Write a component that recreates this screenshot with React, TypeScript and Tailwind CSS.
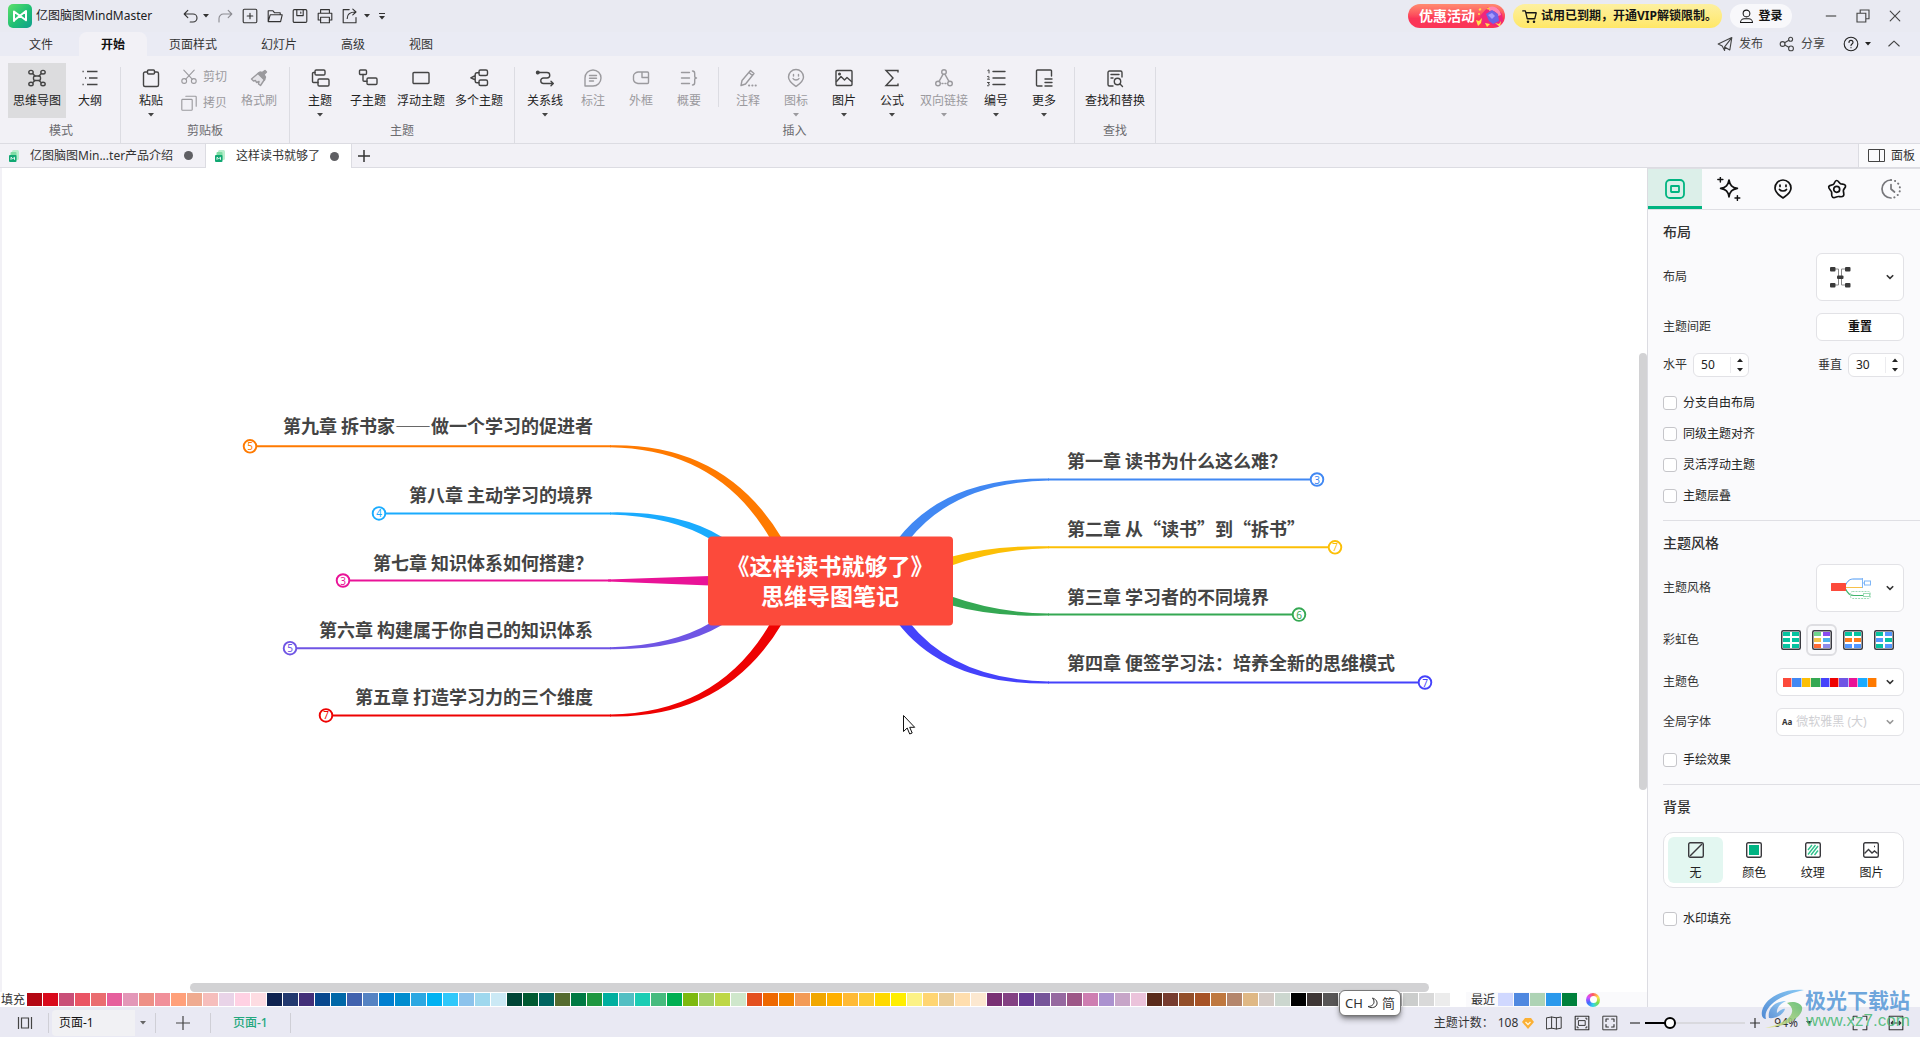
import React from 'react';

const FILL_COLORS = [
  '#b30713', '#d9091c', '#c94f78', '#ea5465', '#ea6c70', '#e65f9d', '#e397b8', '#ee9086', '#f1909a', '#ffa07a',
  '#efab90', '#f6bebc', '#e9d4e8', '#ffd1e3', '#fddce2', '#0f2350', '#22396f', '#432f78', '#08488e', '#0068a8',
  '#4162ae', '#5583c3', '#007fd0', '#008dcf', '#2ca8e2', '#00b2f2', '#2fc8fa', '#8cc3ec', '#9fd8ee', '#cbe9f5',
  '#004536', '#005a31', '#006460', '#556b2f', '#007a43', '#1f9740', '#00af9f', '#53bfc3', '#1bcdb4', '#47bb7e',
  '#00af52', '#7db90f', '#a6d064', '#bed745', '#cfe7cb', '#e4501f', '#ee6800', '#f38500', '#f39b56', '#f1a700',
  '#ffb000', '#ffba35', '#fdcb35', '#ffd900', '#ffee00', '#fcf286', '#ffd572', '#ebcd97', '#ffdeae', '#fce8d0',
  '#793174', '#844183', '#673c93', '#765599', '#9669a0', '#9d5787', '#ce7eb1', '#ab92cf', '#c7a5c8', '#ebc3db',
  '#5a2b1b', '#773c2f', '#934f2a', '#a75326', '#bf783f', '#b4866c', '#dfb885', '#d4cbc6', '#ccd7cf', '#000000',
  '#3e3635', '#585656', '#727171', '#898989', '#a0a0a0', '#b5b5b6', '#cbcdcc', '#d9d9d9', '#ececec',
];

const RECENT_COLORS = ['#d0d8ff', '#4f88e0', '#aed3b5', '#2b99ec', '#00813c'];

const THEME_COLORS = ['#fc4a3b', '#4188f3', '#fcbf06', '#35a853', '#4542fb', '#ee0202', '#6f55e4', '#e91397', '#1aabfe', '#ff7a00'];

interface Branch {
  label: string;
  color: string;
  count: number;
  side: 'left' | 'right';
  y: number;
  baseline: number;
  dot: number;
  shape: string;
}

const BRANCHES: Branch[] = [
  { label: '第九章 拆书家——做一个学习的促进者', color: '#ff7a00', count: 5, side: 'left', y: 446.3, baseline: 433, dot: 250, shape: 'M610 445.3Q726 443 783 540L771 540Q719 449 610 447.3Z' },
  { label: '第八章 主动学习的境界', color: '#1aabfe', count: 4, side: 'left', y: 513.4, baseline: 502, dot: 379, shape: 'M610 512.4Q680 511 722 537L722 542L712 540Q672 516 610 514.4Z' },
  { label: '第七章 知识体系如何搭建？', color: '#e91397', count: 3, side: 'left', y: 580.5, baseline: 570, dot: 343, shape: 'M608 579.5L710 576L710 585.4L608 581.5Z' },
  { label: '第六章 构建属于你自己的知识体系', color: '#6f55e4', count: 5, side: 'left', y: 648.2, baseline: 637, dot: 290, shape: 'M610 649.2Q680 650 722 625L722 620L712 622Q672 646 610 647.2Z' },
  { label: '第五章 打造学习力的三个维度', color: '#ee0202', count: 7, side: 'left', y: 715.4, baseline: 704, dot: 326, shape: 'M610 716.4Q726 719 783 622L771 622Q719 713 610 714.4Z' },
  { label: '第一章 读书为什么这么难？', color: '#4188f3', count: 3, side: 'right', y: 479.5, baseline: 468, dot: 1317, shape: 'M1049 478.5Q945 477 897 540L909 540Q955 482 1049 480.5Z' },
  { label: '第二章 从“读书”到“拆书”', color: '#fcbf06', count: 7, side: 'right', y: 547.3, baseline: 536, dot: 1335, shape: 'M1049 546.3Q993 545 950 557L950 566Q998 549 1049 548.3Z' },
  { label: '第三章 学习者的不同境界', color: '#35a853', count: 6, side: 'right', y: 614.6, baseline: 604, dot: 1299, shape: 'M1049 615.6Q993 617 950 605L950 596Q998 613 1049 613.6Z' },
  { label: '第四章 便签学习法：培养全新的思维模式', color: '#4542fb', count: 7, side: 'right', y: 682.5, baseline: 670, dot: 1425, shape: 'M1049 683.5Q945 685 897 622L909 622Q955 680 1049 681.5Z' },
];

interface IconProps {
  children: React.ReactNode;
  className?: string;
}

// 20px outline icon used in the ribbon, the title bar and the side panel
const Icon: React.FC<IconProps> = ({ children, className = 'size-5' }) => (
  <svg
    viewBox="0 0 20 20"
    fill="none"
    stroke="currentColor"
    strokeWidth="1.4"
    strokeLinecap="round"
    strokeLinejoin="round"
    className={`shrink-0 ${className}`}
    aria-hidden="true"
  >
    {children}
  </svg>
);

const Caret: React.FC<{ className?: string }> = ({ className = '' }) => (
  <svg viewBox="0 0 6 4" fill="currentColor" className={`h-1 w-1.5 shrink-0 ${className}`} aria-hidden="true">
    <path d="M0 0h6L3 3.6z" />
  </svg>
);

const Chevron: React.FC<{ className?: string }> = ({ className = 'text-[#333]' }) => (
  <svg viewBox="0 0 8 6" fill="none" stroke="currentColor" strokeWidth="1.6" className={`h-1.5 w-2 shrink-0 ${className}`} aria-hidden="true">
    <path d="M.8 1.2 4 4.4l3.2-3.2" />
  </svg>
);

const icons = {
  mindmap: (
    <Icon>
      <rect x="6.5" y="8" width="7" height="4.5" rx="1.5" />
      <ellipse cx="4" cy="4.2" rx="2.2" ry="1.8" />
      <ellipse cx="16" cy="4.2" rx="2.2" ry="1.8" />
      <ellipse cx="4" cy="16" rx="2.2" ry="1.8" />
      <ellipse cx="16" cy="16" rx="2.2" ry="1.8" />
      <path d="M5.6 5.5 8 8M14.4 5.5 12 8M5.6 14.7l2.4-2.2M14.4 14.7 12 12.5" />
    </Icon>
  ),
  outline: (
    <Icon>
      <path d="M2.5 3.5h1.2M7 3.5h10.5M5 10h1.2M9 10h8.5M2.5 16.5h1.2M7 16.5h10.5" strokeLinecap="butt" />
    </Icon>
  ),
  paste: (
    <Icon>
      <path d="M6.5 4H4a1.5 1.5 0 0 0-1.5 1.5V17A1.5 1.5 0 0 0 4 18.5h12a1.5 1.5 0 0 0 1.5-1.5V5.5A1.5 1.5 0 0 0 16 4h-2.5" />
      <rect x="6.5" y="2" width="7" height="4" rx="1" />
    </Icon>
  ),
  cut: (
    <Icon className="size-4">
      <circle cx="4" cy="15" r="3" />
      <circle cx="16" cy="15" r="3" />
      <path d="M3.5 1.5 14 12.7M16.5 1.5 6 12.7" />
    </Icon>
  ),
  copy: (
    <Icon className="size-4">
      <rect x="1" y="5.5" width="13" height="13.5" rx="1" />
      <path d="M6 1.5h12a1 1 0 0 1 1 1v11.5" />
    </Icon>
  ),
  brush: (
    <Icon>
      <path d="m2.5 11 7-6 6 6.5-4 6-2-1.5.5-2.5-2.5 1-1-2-2 .5z" fill="currentColor" fillOpacity="0.15" />
      <path d="M9 5.5 15.5 12l1-3-1.5-2.500 2.500-2.500-1.500-1.500L13 4.500l-2-.5z" fill="currentColor" />
    </Icon>
  ),
  topic: (
    <Icon>
      <rect x="5" y="2" width="10" height="5" rx="1.2" />
      <rect x="8" y="11" width="11" height="7" rx="1.2" />
      <path d="M5 4.5H3.5a1 1 0 0 0-1 1V13.5a1 1 0 0 0 1 1H8" />
    </Icon>
  ),
  subtopic: (
    <Icon>
      <rect x="1.5" y="2" width="7" height="4.5" rx="1" />
      <rect x="9" y="10" width="10" height="6.5" rx="1.2" />
      <path d="M5 6.5V12.2a1 1 0 0 0 1 1h3" />
    </Icon>
  ),
  floating: (
    <Icon>
      <rect x="2" y="4.5" width="16" height="11" rx="1" />
    </Icon>
  ),
  multi: (
    <Icon>
      <rect x="10" y="2" width="8.5" height="5.5" rx="1.5" />
      <rect x="10" y="12" width="8.5" height="5.5" rx="1.5" />
      <path d="M10 4.7H8A1.800 1.800 0 0 0 6.200 6.500v6.500A1.800 1.800 0 0 0 8 14.800h2M5.500 8 1.800 9.800l3.700 1.700" />
    </Icon>
  ),
  relation: (
    <Icon>
      <path d="M3 4.5h9a2.700 2.700 0 0 1 0 5.500H8.500a2.700 2.700 0 0 0 0 5.500H18M16 13.300l2.300 2.200-2.300 2.200" />
      <circle cx="2.8" cy="4.5" r="1.3" fill="currentColor" />
    </Icon>
  ),
  callout: (
    <Icon>
      <path d="M2 18V10a8 8 0 1 1 8 8z" />
      <path d="M6.500 7.500h7M6.500 10.300h7M6.500 13h4" />
    </Icon>
  ),
  boundary: (
    <Icon>
      <path d="M7 4h9.500a1 1 0 0 1 1 1v9.500a1 1 0 0 1-1 1H7c-2.500-.6-4.500-2.300-4.500-4V8c0-1.700 2-3.600 4.500-4zM11 4v5.500h6.500" />
    </Icon>
  ),
  summary: (
    <Icon>
      <path d="M2.500 4.500h8M2.500 10h8M2.500 15.500h8M13.500 3c1.800 0 2.200.8 2.200 2.500v2.500c0 1.200.5 2 1.800 2-1.300 0-1.800.8-1.800 2v2.500c0 1.700-.4 2.500-2.200 2.500" />
    </Icon>
  ),
  note: (
    <Icon>
      <path d="M3 17.500 4 12.500 12.500 2.500l3.500 3L7.500 16zM11 4.500l3.300 3" />
      <path d="M11 17.500h.2M14.300 17.500h.2M17.600 17.500h.2" strokeWidth="2" />
    </Icon>
  ),
  mark: (
    <Icon>
      <path d="M10 18.500c-3-2.200-7.500-5-7.500-9.500a7.500 7.500 0 0 1 15 0c0 4.500-4.500 7.300-7.500 9.500z" />
      <path d="M7.500 6.500V8M12.500 6.500V8M7 10.500c1.200 2 4.800 2 6 0" />
    </Icon>
  ),
  image: (
    <Icon>
      <rect x="2" y="2.500" width="16" height="15" rx="1" />
      <path d="m2.500 13.500 4.500-5 3.500 3.500 2.500-2.500 4.500 4" />
      <circle cx="5.500" cy="6" r=".8" fill="currentColor" />
    </Icon>
  ),
  formula: (
    <Icon>
      <path d="M16 4V2.500H4l7 7.500-7 7.500h12V16" strokeLinejoin="miter" />
    </Icon>
  ),
  link: (
    <Icon>
      <circle cx="10" cy="4" r="2.300" />
      <circle cx="4" cy="15.500" r="2.300" />
      <circle cx="16" cy="15.500" r="2.300" />
      <path d="M9 6.300 5.200 13.200M11 6.300l3.800 6.900M8 15.500h1M11 15.500h1" />
    </Icon>
  ),
  numbering: (
    <Icon>
      <path d="M7 3.500h12M7 10h12M7 16.500h12" />
      <path d="M1.800 2.500 3 1.800V5M1.500 8.500c1.800-.8 2.500.6 0 2.700h2M1.500 14.500h2L2.300 16c1.700 0 1.500 2.300-.8 1.800" strokeWidth="1" />
    </Icon>
  ),
  more: (
    <Icon>
      <path d="M17.500 8V3a1 1 0 0 0-1-1H3.500a1 1 0 0 0-1 1v14a1 1 0 0 0 1 1H8M11 11h7M11 14.500h7M11 18h7" />
    </Icon>
  ),
  find: (
    <Icon>
      <path d="M8 18H4.500a1.500 1.500 0 0 1-1.500-1.500v-12A1.500 1.500 0 0 1 4.500 3h11A1.500 1.500 0 0 1 17 4.500V9M6 6.500h8M6 10h2" />
      <circle cx="12.500" cy="13.500" r="3.200" />
      <path d="m15 16 2.500 2.500" />
    </Icon>
  ),
};

interface RibbonButtonProps {
  icon: React.ReactNode;
  label: string;
  caret?: boolean;
  disabled?: boolean;
  active?: boolean;
  width?: string;
}

const RibbonButton: React.FC<RibbonButtonProps> = ({ icon, label, caret, disabled, active, width = 'w-12' }) => (
  <button
    type="button"
    disabled={disabled}
    className={`flex h-[55px] shrink-0 flex-col items-center pt-[5px] ${width} ${active ? 'bg-[#dcdcde]' : ''} ${
      disabled ? 'text-[#9b9a9e]' : 'text-[#444]'
    }`}
  >
    {icon}
    <span className={`mt-[5px] leading-4 whitespace-nowrap ${disabled ? '' : 'text-[#222]'}`}>{label}</span>
    {caret && <Caret className="mt-1" />}
  </button>
);

interface RibbonGroupProps {
  title: string;
  children: React.ReactNode;
}

const RibbonGroup: React.FC<RibbonGroupProps> = ({ title, children }) => (
  <div className="relative flex flex-col pt-[7px] pr-[7px] pl-1.5 after:absolute after:top-[11px] after:right-0 after:bottom-0 after:w-px after:bg-[#dcdce2]">
    <div className="flex">{children}</div>
    <div className="mt-[5px] text-center leading-4 text-[#6b6b6f]">{title}</div>
  </div>
);

const TitleBar: React.FC = () => (
  <header className="flex h-8 items-center bg-[#e9eaf2] pl-2">
    <svg viewBox="0 0 24 24" className="size-6" aria-hidden="true">
      <defs>
        <linearGradient id="logo" x1="0" y1="0" x2="1" y2="1">
          <stop offset="0" stopColor="#5ee06a" />
          <stop offset=".55" stopColor="#1fbf74" />
          <stop offset="1" stopColor="#0f9f8f" />
        </linearGradient>
      </defs>
      <rect width="24" height="24" rx="5" fill="url(#logo)" />
      <path d="M6 17V7.500l12 8.800V7L6 16.500" fill="none" stroke="#fff" strokeWidth="2" strokeLinejoin="round" strokeLinecap="round" />
    </svg>
    <h1 className="ml-1 text-xs text-[#1c1c1e]">亿图脑图MindMaster</h1>

    <div className="ml-[31px] flex items-center text-[#333]">
      <button type="button" aria-label="撤销" className="flex items-center gap-1">
        <Icon className="size-4"><path d="M6 3 1.500 7.500 6 12M2 7.500h10.500a5 5 0 0 1 0 10H9" /></Icon>
        <Caret />
      </button>
      <button type="button" aria-label="重做" className="ml-2 text-[#8c8c92]">
        <Icon className="size-4"><path d="m14 3 4.500 4.500L14 12M18 7.500H8a5.500 5.500 0 0 0-5.500 5.500v4.500" /></Icon>
      </button>
      <div className="ml-[9px] flex gap-[9px]">
        <button type="button" aria-label="新建">
          <Icon className="size-4"><rect x="1.500" y="1.500" width="17" height="17" rx="1.500" /><path d="M10 6.500v7M6.500 10h7" /></Icon>
        </button>
        <button type="button" aria-label="打开">
          <Icon className="size-4"><path d="M1.500 17V3.500h6l2 2.500H16.500v2.500M1.500 17 4 8.500h15L17 17z" /></Icon>
        </button>
        <button type="button" aria-label="保存">
          <Icon className="size-4"><rect x="1.500" y="2" width="17" height="16" rx="1.500" /><path d="M6 2v7.500h8V2M11 5v1.500" /></Icon>
        </button>
        <button type="button" aria-label="打印">
          <Icon className="size-4"><path d="M4.500 6V2h11v4M4.500 15h-3V6.500h17V15h-3" /><path d="M4.500 11.500h11V18.500h-11z" /></Icon>
        </button>
        <button type="button" aria-label="导出" className="flex items-center gap-1.5">
          <Icon className="size-4"><path d="M9 2H1.500v16.500h16V12M6.500 13c0-5 3-8 10.500-8M13.500 1.500 17.500 5l-4 3.500" /></Icon>
          <Caret />
        </button>
        <button type="button" aria-label="自定义快速访问" className="flex flex-col items-center justify-center gap-0.5">
          <span className="h-px w-1.5 bg-[#333]" />
          <Caret />
        </button>
      </div>
    </div>

    <div className="ml-auto flex items-center text-xs">
      <a href="#promo" className="flex h-6 w-[97px] items-center overflow-hidden rounded-full bg-linear-to-b from-[#ff8a70] to-[#fb3557] to-60% pl-[11px] text-sm font-bold text-white">
        优惠活动
        <svg viewBox="0 0 28 24" className="h-6 w-7" aria-hidden="true">
          <path d="m5 12 8-9 9 1 5 6 1 7-5 6-9-3-6 1z" fill="#f0267c" />
          <path d="M14 3c6-2 11 2 12 8l-3 1c-1-4-4-6-9-5z" fill="#ff86b4" />
          <path d="m11 10 6-4 6 4 1 7-6 3-4-3z" fill="#6d63e6" />
          <path d="m13 11 4-2 3 3-3 3z" fill="#a79bff" />
          <path d="m1 16 3 1 3-3-1 5-3 3zM10 19l5 1-3 3zM20 19l4 1 2-3-1 6zM5 4l1.500 1L5 7 3.500 5.500z" fill="#ffdf4d" />
          <path d="m11 5 3-2 1 3z" fill="#ffc83d" />
          <circle cx="4" cy="10" r="1" fill="#ffdf4d" />
        </svg>
      </a>
      <a href="#vip" className="ml-2 flex h-6 w-[209px] items-center rounded-full bg-linear-to-b from-[#fdf0a0] to-[#ffe765] pl-[9px] font-bold whitespace-nowrap text-[#151515]">
        <Icon className="mr-1 size-[15px]"><path d="M1 2.500h3.500L7 13h10l2-8H5.200" strokeWidth="1.700" /><circle cx="8" cy="17" r="1" fill="currentColor" /><circle cx="16" cy="17" r="1" fill="currentColor" /></Icon>
        试用已到期，开通VIP解锁限制。
      </a>
      <button type="button" className="ml-2 flex h-6 w-[62px] items-center justify-center gap-1 rounded-full bg-[#f8f8fb] font-bold text-[#151515]">
        <Icon className="size-[15px]"><circle cx="10" cy="6" r="4.500" /><path d="M2 18c0-3 2.500-5 5-5h6c2.500 0 5 2 5 5z" /></Icon>
        登录
      </button>
      <div className="ml-[31px] flex items-center gap-4 pr-[17px] text-[#444]">
        <button type="button" aria-label="最小化"><Icon className="size-4"><path d="M3.500 10h13" strokeLinecap="butt" /></Icon></button>
        <button type="button" aria-label="还原"><Icon className="size-4"><path d="M2.500 6.500h11v11h-11zM6.500 6.500V2.500h11v11h-4" strokeLinejoin="miter" /></Icon></button>
        <button type="button" aria-label="关闭"><Icon className="size-4"><path d="m4 4 12 12M16 4 4 16" /></Icon></button>
      </div>
    </div>
  </header>
);

const MenuBar: React.FC = () => (
  <nav className="flex h-6 items-center bg-[#eaebf4] pl-[7px] text-xs text-[#333]">
    <button type="button" className="mr-1 px-[22px] pt-0.5">文件</button>
    <button type="button" className="h-full rounded-t-lg bg-[#f2f1f6] px-[22px] pt-0.5 font-bold text-[#111]">开始</button>
    {['页面样式', '幻灯片', '高级', '视图'].map((name) => (
      <button key={name} type="button" className="px-[22px] pt-0.5">{name}</button>
    ))}
    <div className="ml-auto flex items-center pr-[18px] text-[#444]">
      <button type="button" className="flex items-center gap-1.5">
        <Icon className="size-4"><path d="M18.500 2 1.500 10l5 2.500M18.500 2 16 17.500l-6-3.500M18.500 2l-9 11.500V18l-3-5.500" /></Icon>
        发布
      </button>
      <button type="button" className="ml-4 flex items-center gap-1.5">
        <Icon className="size-4"><circle cx="4.500" cy="10" r="3" /><circle cx="14.500" cy="4" r="2.500" /><circle cx="15" cy="15.500" r="3" /><path d="m7 8.500 5.300-3.200M7.200 11.300l5 2.800" /></Icon>
        分享
      </button>
      <button type="button" aria-label="帮助" className="ml-[18px] flex items-center gap-1.5 text-[#222]">
        <Icon className="size-4"><circle cx="10" cy="10" r="8.500" /><path d="M7.500 8c0-3.300 5-3.300 5 0 0 2-2.500 2-2.500 4M10 14.500v.2" /></Icon>
        <Caret />
      </button>
      <button type="button" aria-label="收起功能区" className="ml-[15px]">
        <Icon className="size-4"><path d="m3.500 12.500 6.500-6 6.500 6" /></Icon>
      </button>
    </div>
  </nav>
);

const Ribbon: React.FC = () => (
  <div className="flex h-[88px] border-b border-[#dcdce2] bg-[#f2f1f6] pl-0.5 text-xs">
    <RibbonGroup title="模式">
      <RibbonButton icon={icons.mindmap} label="思维导图" active width="w-[58px]" />
      <RibbonButton icon={icons.outline} label="大纲" />
    </RibbonGroup>
    <RibbonGroup title="剪贴板">
      <RibbonButton icon={icons.paste} label="粘贴" caret />
      <div className="ml-1.5 flex flex-col gap-2.5 pt-1.5 text-[#9b9a9e]">
        <button type="button" disabled className="flex h-4 items-center gap-1.5">{icons.cut}剪切</button>
        <button type="button" disabled className="flex h-4 items-center gap-1.5">{icons.copy}拷贝</button>
      </div>
      <RibbonButton icon={icons.brush} label="格式刷" disabled width="ml-2 w-12" />
    </RibbonGroup>
    <RibbonGroup title="主题">
      <RibbonButton icon={icons.topic} label="主题" caret />
      <RibbonButton icon={icons.subtopic} label="子主题" />
      <RibbonButton icon={icons.floating} label="浮动主题" width="w-[58px]" />
      <RibbonButton icon={icons.multi} label="多个主题" width="w-[58px]" />
    </RibbonGroup>
    <RibbonGroup title="插入">
      <RibbonButton icon={icons.relation} label="关系线" caret />
      <RibbonButton icon={icons.callout} label="标注" disabled />
      <RibbonButton icon={icons.boundary} label="外框" disabled />
      <RibbonButton icon={icons.summary} label="概要" disabled />
      <div className="mx-[5px] mt-1 h-10 w-px bg-[#dcdce2]" />
      <RibbonButton icon={icons.note} label="注释" disabled />
      <RibbonButton icon={icons.mark} label="图标" disabled caret />
      <RibbonButton icon={icons.image} label="图片" caret />
      <RibbonButton icon={icons.formula} label="公式" caret />
      <RibbonButton icon={icons.link} label="双向链接" disabled caret width="w-14" />
      <RibbonButton icon={icons.numbering} label="编号" caret />
      <RibbonButton icon={icons.more} label="更多" caret />
    </RibbonGroup>
    <RibbonGroup title="查找">
      <RibbonButton icon={icons.find} label="查找和替换" width="w-[68px]" />
    </RibbonGroup>
  </div>
);

const DocIcon: React.FC = () => (
  <svg viewBox="0 0 12 14" className="h-3.5 w-3 shrink-0" aria-hidden="true">
    <rect x="4" y="1" width="7" height="10" rx="1.500" fill="#b9efcd" />
    <rect x="2.500" y="3" width="6" height="8" rx="1" fill="#7fdda4" />
    <rect x="1" y="6" width="7.500" height="7" rx="1" fill="#10a872" />
    <path d="M3 10.800V8.300l1.800 1.400 1.700-1.400v2.500" fill="none" stroke="#fff" strokeWidth=".9" />
  </svg>
);

const DocTabs: React.FC = () => (
  <div className="flex h-6 border-b border-[#dcdce2] bg-[#f2f1f6] text-xs text-[#333]">
    <button type="button" className="flex w-[206px] items-center border-r border-[#dcdce2] pl-2">
      <DocIcon />
      <span className="ml-2.5">亿图脑图Min...ter产品介绍</span>
      <span className="mr-3 ml-auto size-[9px] rounded-full bg-[#5f5f63]" />
    </button>
    <button type="button" className="-mb-px flex w-[146px] items-center border-r border-[#dcdce2] bg-white pl-2">
      <DocIcon />
      <span className="ml-2.5">这样读书就够了</span>
      <span className="mr-3 ml-auto size-[9px] rounded-full bg-[#5f5f63]" />
    </button>
    <button type="button" aria-label="新建标签" className="px-1.5">
      <svg viewBox="0 0 12 12" className="size-3" aria-hidden="true"><path d="M6 0v12M0 6h12" stroke="#333" strokeWidth="1.500" /></svg>
    </button>
    <button type="button" className="ml-auto flex w-[62px] items-center gap-1.5 border-l border-[#dcdce2] bg-[#fafafc] pl-[9px]">
      <svg viewBox="0 0 17 13" fill="none" stroke="#444" className="h-[13px] w-[17px]" aria-hidden="true"><path d="M.5.5h16v12H.5zM11.500.5v12" /></svg>
      面板
    </button>
  </div>
);

const MindMap: React.FC = () => (
  <svg viewBox="240 410 1200 330" className="absolute top-[242px] left-[240px] h-[330px] w-[1200px]" role="img" aria-label="思维导图">
    {BRANCHES.map((b) => (
      <g key={b.label}>
        <path d={b.shape} fill={b.color} />
        <path d={b.side === 'left' ? `M${b.dot + 7} ${b.y}H611` : `M1048 ${b.y}H${b.dot - 7}`} stroke={b.color} strokeWidth="2" />
        <circle cx={b.dot} cy={b.y} r="6.300" fill="#fff" stroke={b.color} strokeWidth="1.900" />
        <text x={b.dot} y={b.y + 4} textAnchor="middle" fill={b.color} className="text-[10px]">{b.count}</text>
        <text
          x={b.side === 'left' ? 593 : 1067}
          y={b.baseline}
          textAnchor={b.side === 'left' ? 'end' : 'start'}
          fill="#444"
          className="font-['Noto_Sans_CJK_SC',sans-serif] text-lg font-bold"
        >
          {b.label}
        </text>
      </g>
    ))}
    <rect x="708" y="536.500" width="245" height="89" rx="4" fill="#fc4a3b" />
    <g fill="#fff" textAnchor="middle" className="font-['Noto_Sans_CJK_SC',sans-serif] text-[23px] font-bold">
      <text x="830" y="575">《这样读书就够了》</text>
      <text x="830" y="605">思维导图笔记</text>
    </g>
    <path d="M903.500 715.500v16l3.700-3.500 2.500 6 2.500-1-2.500-5.700h5z" fill="#fff" stroke="#111" />
  </svg>
);

interface SwatchesProps {
  colors: string[];
}

const Swatches: React.FC<SwatchesProps> = ({ colors }) => (
  <div className="flex gap-px">
    {colors.map((color) => (
      <button key={color} type="button" aria-label={color} className="h-[13px] w-[15px]" style={{ backgroundColor: color }} />
    ))}
  </div>
);

const Palette: React.FC = () => (
  <div className="relative flex h-[15px] items-center bg-white text-xs leading-[14px] text-[#333]">
    <span className="w-[27px] pl-px">填充</span>
    <Swatches colors={FILL_COLORS} />
    <div className="ml-4 flex grow items-center self-stretch bg-[#fafafc] pl-[5px]">
      <span className="w-[27px]">最近</span>
      <Swatches colors={RECENT_COLORS} />
      <button type="button" aria-label="更多颜色" className="ml-[9px] flex size-3.5 items-center justify-center rounded-full bg-[conic-gradient(#ff5a5a,#ffe14a,#7be04a,#2fd6e8,#4468ff,#d94bff,#ff5a5a)]">
        <span className="size-[7px] rounded-full bg-white" />
      </button>
    </div>
    <div className="absolute -top-[2px] left-[1339px] flex h-[26px] w-[62px] items-center justify-center gap-1 rounded-md border border-[#777] bg-white text-[13px] shadow-md shadow-black/40">
      CH
      <svg viewBox="0 0 11 12" className="h-3 w-[11px]" fill="none" stroke="#333" aria-hidden="true"><path d="M5.500 1c3 1 5 3 4.500 6-.5 3-5 5-9 2.500 3.500 0 6-2 6-4.500 0-1.500-.5-2.500-1.500-4z" /></svg>
      简
    </div>
  </div>
);

const Canvas: React.FC = () => (
  <main className="flex min-w-0 flex-1 flex-col border-l-2 border-[#f2f1f6] bg-white">
    <div className="flex min-h-0 flex-1">
      <div className="relative -ml-0.5 min-w-0 flex-1">
        <MindMap />
      </div>
      <div className="w-2 pt-[185px]">
        <div className="h-[437px] rounded-full bg-[#d2d2d4]" />
      </div>
    </div>
    <div className="pr-[218px] pl-[188px]">
      <div className="h-[9px] rounded-full bg-[#d2d2d4]" />
    </div>
    <div className="-ml-0.5">
      <Palette />
    </div>
  </main>
);

const CheckRow: React.FC<{ label: string }> = ({ label }) => (
  <label className="flex h-[31px] items-center gap-1.5 text-[#222]">
    <input type="checkbox" className="size-3.5 appearance-none rounded-[3px] border border-[#c6c6ca] bg-white" />
    {label}
  </label>
);

interface SpinBoxProps {
  id: string;
  label: string;
  value: number;
}

const SpinBox: React.FC<SpinBoxProps> = ({ id, label, value }) => (
  <div className="flex items-center gap-1.5">
    <label htmlFor={id}>{label}</label>
    <div className="flex h-6 w-14 items-center rounded-md border border-[#e2e2e6] bg-white">
      <input id={id} type="text" inputMode="numeric" defaultValue={value} className="w-[37px] border-r border-[#ececef] pl-[7px] text-[#222] outline-none" />
      <div className="flex grow flex-col items-center gap-1.5 text-[#222]">
        <button type="button" aria-label={`${label}增加`}><Caret className="rotate-180" /></button>
        <button type="button" aria-label={`${label}减少`}><Caret /></button>
      </div>
    </div>
  </div>
);

const GridIcon: React.FC<{ cells: string[] }> = ({ cells }) => (
  <svg viewBox="0 0 20 20" className="size-5 shrink-0" aria-hidden="true">
    <rect x=".75" y=".75" width="18.500" height="18.500" rx="1.500" fill="#fff" stroke="#3a3a40" strokeWidth="1.500" />
    {cells.map((color, i) => (
      <rect key={i} x={i % 2 ? 11 : 2} y={2 + Math.floor(i / 2) * 6} width="7" height="4" fill={color} />
    ))}
  </svg>
);

const RAINBOWS = [
  ['#06c3a0', '#06c3a0', '#06c3a0', '#06c3a0', '#06c3a0', '#06c3a0'],
  ['#6fd58c', '#8a4df0', '#f3c34a', '#4fb4ec', '#ff6a35', '#8f8ce8'],
  ['#06c3a0', '#06c3a0', '#ff7d1c', '#ff7d1c', '#5297ff', '#5297ff'],
  ['#06c3a0', '#5297ff', '#5297ff', '#06c3a0', '#06c3a0', '#5297ff'],
];

const PANEL_TABS = [
  { name: '布局', icon: <Icon><rect x="1" y="1" width="18" height="18" rx="4" strokeWidth="1.800" /><rect x="6" y="7" width="8" height="6" rx=".5" strokeWidth="1.800" /></Icon> },
  { name: 'AI', icon: <Icon className="size-6"><path d="M10 2.500c.8 4.500 2.500 6.200 7 7-4.500.8-6.200 2.500-7 7-.8-4.500-2.500-6.200-7-7 4.500-.8 6.200-2.500 7-7z" /><path d="M2.800 0v4.200M.7 2.100h4.200M17 15.500v4M15 17.500h4" strokeWidth="1.200" /></Icon> },
  { name: '图标', icon: <Icon><path d="M10 19c-3-2.200-8-4.800-8-10a8 8 0 0 1 16 0c0 5.200-5 7.800-8 10z" strokeWidth="1.700" /><path d="M7 6v1.500M13 6v1.500M6.500 10.500c1.500 2 5.500 2 7 0" strokeWidth="1.700" /></Icon> },
  { name: '剪贴画', icon: <Icon><path d="M10 1c2 0 2.500 2.500 4 3.200 1.600.8 4.500.2 5 2 .5 1.900-1.800 2.900-2.100 4.600-.3 1.900 1.300 4.200 0 5.600-1.400 1.600-3.500.6-5 .6-1.700-.1-3.800 2-5.800.8-1.600-1-.6-3.400-1-5.200-.3-1.600-3.300-3.500-2.900-5.300.5-1.900 3-1.300 4.600-2.200C8 4.500 8.200 1 10 1z" transform="translate(-.5 .5)" strokeWidth="1.700" /><circle cx="9.700" cy="10.300" r="3" strokeWidth="1.700" /></Icon> },
  { name: '历史', icon: <Icon className="size-5 text-[#77777b]"><path d="M10 1a9 9 0 0 0 0 18" strokeWidth="1.700" /><path d="M10 1a9 9 0 0 1 0 18" strokeWidth="2" strokeDasharray="0.100 4" /><path d="M10 5.500V10l3.500 3" strokeWidth="1.700" /></Icon> },
];

const STROKE = { fill: 'none', stroke: '#3a3a3e', strokeWidth: 1.4 };

const BACKGROUNDS = [
  { name: '无', drawing: <path d="M2 14 14 2" {...STROKE} /> },
  { name: '颜色', drawing: <rect x="3" y="3" width="10" height="10" fill="#00b382" /> },
  { name: '纹理', drawing: <path d="m3 8 4-5M3 12.500 10.500 3M6 13l7-9M9.500 13 13 8.500" {...STROKE} stroke="#2fc28c" /> },
  { name: '图片', drawing: <path d="m1.500 11.500 4-4L9 11l2.500-2 3 2.500M11 4.500h1" {...STROKE} /> },
];

const SidePanel: React.FC = () => (
  <aside className="w-[273px] shrink-0 border-l border-[#dcdce2] bg-[#fafafc] text-xs text-[#333]">
    <div className="flex h-[42px] border-y border-[#dfdfe4] text-[#111]" role="tablist">
      {PANEL_TABS.map((tab, i) => (
        <button
          key={tab.name}
          type="button"
          role="tab"
          aria-label={tab.name}
          aria-selected={i === 0}
          className={`flex w-[54px] items-center justify-center border-b-[3px] pt-0.5 ${
            i === 0 ? 'border-[#00b481] bg-[#dcefe9] text-[#00b481]' : 'border-transparent'
          }`}
        >
          {tab.icon}
        </button>
      ))}
    </div>

    <section className="pl-[15px]">
      <div className="pr-4">
        <h2 className="pt-3 text-sm leading-5 font-medium">布局</h2>
        <div className="mt-[11px] flex items-center justify-between">
          布局
          <button type="button" aria-label="选择布局" className="flex h-12 w-[88px] items-center justify-between rounded-md border border-[#e2e2e6] bg-white pr-[9px] pl-3">
            <svg viewBox="0 0 22 22" className="size-[22px]" fill="#3a3a3a" aria-hidden="true">
              <path d="M6 3h3.500v16H6M16 3h-3.500v16H16" fill="none" stroke="#8a8a8a" />
              <rect x="1" y="1" width="5.500" height="4.500" rx="1" />
              <rect x="16" y="1" width="5.500" height="4.500" rx="1" />
              <rect x="1" y="17" width="5.500" height="4.500" rx="1" />
              <rect x="16" y="17" width="5.500" height="4.500" rx="1" />
              <rect x="8" y="9.500" width="6.500" height="3.500" rx="1" />
            </svg>
            <Chevron />
          </button>
        </div>
        <div className="mt-3 flex items-center justify-between">
          主题间距
          <button type="button" className="h-7 w-[88px] rounded-md border border-[#e2e2e6] bg-white font-bold text-[#111]">重置</button>
        </div>
        <div className="mt-3 mb-2.5 flex justify-between">
          <SpinBox id="gap-x" label="水平" value={50} />
          <SpinBox id="gap-y" label="垂直" value={30} />
        </div>
        <CheckRow label="分支自由布局" />
        <CheckRow label="同级主题对齐" />
        <CheckRow label="灵活浮动主题" />
        <CheckRow label="主题层叠" />
      </div>
      <hr className="mt-[9px] border-[#dfdfe4]" />
    </section>

    <section className="pl-[15px]">
      <div className="pr-4">
        <h2 className="pt-3 text-sm leading-5 font-medium">主题风格</h2>
        <div className="mt-[11px] flex items-center justify-between">
          主题风格
          <button type="button" aria-label="选择主题风格" className="flex h-12 w-[88px] items-center justify-between rounded-md border border-[#e2e2e6] bg-white pr-[9px] pl-3.5">
            <svg viewBox="0 0 40 22" className="h-[22px] w-10" fill="none" aria-hidden="true">
              <path d="M14 9c3-6 5-7 9-7h8" stroke="#4a98f5" />
              <path d="M14 10.500h17" stroke="#f7c04a" />
              <path d="M14 11c3 6 5 7.500 9 7.500h9" stroke="#3fb56c" strokeWidth="1.200" />
              <path d="M31.500 1v10M31.500 6h2" stroke="#7fb6f7" />
              <rect x="33.500" y="4" width="6" height="4" stroke="#7fb6f7" />
              <rect x="19.500" y="14.500" width="20" height="7" rx="2" stroke="#9ddbb5" strokeDasharray="2 1" />
              <rect x="32.500" y="16.500" width="6" height="3" stroke="#9ddbb5" />
              <rect x="0" y="6" width="15" height="8" rx=".5" fill="#fc4a3b" />
            </svg>
            <Chevron />
          </button>
        </div>
        <div className="mt-3 flex items-center justify-between">
          彩虹色
          <div className="flex pr-[5px]">
            {RAINBOWS.map((cells, i) => (
              <button
                key={i}
                type="button"
                aria-label={`彩虹色 ${i + 1}`}
                className={`flex h-8 w-[31px] items-center justify-center rounded-md border-2 ${i === 1 ? 'border-[#dedee2]' : 'border-transparent'}`}
              >
                <GridIcon cells={cells} />
              </button>
            ))}
          </div>
        </div>
        <div className="mt-3 flex items-center justify-between">
          主题色
          <button type="button" aria-label="选择主题色" className="flex h-7 w-32 items-center justify-between rounded-md border border-[#e2e2e6] bg-white pr-[9px] pl-1.5">
            <span className="flex w-[94px]">
              {THEME_COLORS.map((color) => (
                <span key={color} className="h-[9px] flex-1 border-r border-white/60" style={{ backgroundColor: color }} />
              ))}
            </span>
            <Chevron />
          </button>
        </div>
        <div className="mt-3 flex items-center justify-between">
          <label htmlFor="font">全局字体</label>
          <div className="flex h-7 w-32 items-center rounded-md border border-[#e2e2e6] bg-white pr-[9px] pl-[5px]">
            <span className="text-[8px] font-bold">Aa</span>
            <select id="font" disabled className="ml-1 grow appearance-none text-[#cfcfd3] opacity-100 outline-none">
              <option>微软雅黑 (大)</option>
            </select>
            <Chevron className="text-[#999]" />
          </div>
        </div>
        <div className="mt-2">
          <CheckRow label="手绘效果" />
        </div>
      </div>
      <hr className="mt-[9px] border-[#dfdfe4]" />
    </section>

    <section className="pr-4 pl-[15px]">
      <h2 className="pt-3 text-sm leading-5 font-medium">背景</h2>
      <div className="mt-[15px] flex h-14 justify-between rounded-[10px] border border-[#e2e2e6] bg-white p-1 text-[#222]">
        {BACKGROUNDS.map((bg, i) => (
          <button
            key={bg.name}
            type="button"
            className={`flex w-[55px] flex-col items-center gap-[7px] rounded-md pt-[5px] leading-4 ${i === 0 ? 'bg-[#e3f7f1]' : ''}`}
          >
            <svg viewBox="0 0 16 16" className="size-4 shrink-0" aria-hidden="true">
              <rect x=".7" y=".7" width="14.600" height="14.600" rx="1.500" {...STROKE} />
              {bg.drawing}
            </svg>
            {bg.name}
          </button>
        ))}
      </div>
      <div className="mt-[15px]">
        <CheckRow label="水印填充" />
      </div>
    </section>
  </aside>
);

const Watermark: React.FC = () => (
  <div className="pointer-events-none absolute right-2.5 bottom-2 flex items-end">
    <svg viewBox="0 0 44 40" className="h-10 w-11" aria-hidden="true">
      <defs>
        <linearGradient id="swirl-blue" x1="0" y1="1" x2="1" y2="0">
          <stop offset="0" stopColor="#3f7fd0" />
          <stop offset="1" stopColor="#7cc3f3" />
        </linearGradient>
        <linearGradient id="swirl-green" x1="0" y1="1" x2="1" y2="0">
          <stop offset="0" stopColor="#e9e58a" />
          <stop offset="1" stopColor="#55b768" />
        </linearGradient>
      </defs>
      <path d="M43 1C24-1 4 8 1 22c-1 5 1 8 4 8C2 20 14 7 43 1z" fill="url(#swirl-blue)" opacity=".9" />
      <path d="M8 29C6 20 14 12 25 12c-5 2-10 7-9 12 3-3 7-5 8-4-1 5-9 10-16 9z" fill="url(#swirl-blue)" opacity=".8" />
      <path d="M26 14c5-2 13-1 15 4 2 9-14 20-37 21 14-3 26-9 27-16 1-4-2-7-5-9z" fill="url(#swirl-green)" opacity=".85" />
    </svg>
    <div className="flex flex-col">
      <span className="text-[21px] leading-[26px] font-bold text-[#5a9bd8]/90">极光下载站</span>
      <span className="pl-px font-['Liberation_Sans',sans-serif] text-[17px] leading-4 font-medium text-[#4dbb77]/90">www.xz7.com</span>
    </div>
  </div>
);

const StatusBar: React.FC = () => (
  <footer className="flex h-[30px] items-center bg-[#e9e9f3] pt-0.5 text-xs text-[#333]">
    <button type="button" aria-label="页面视图" className="ml-[17px]">
      <svg viewBox="0 0 16 12" fill="none" stroke="#444" className="h-3 w-4" aria-hidden="true"><path d="M1.500 0v12M14.500 0v12M4.500 1h7v10h-7z" strokeWidth="1.200" /></svg>
    </button>
    <span className="ml-[15px] h-5 w-px bg-[#cfcfd6]" />
    <div className="ml-[3px] flex h-[26px] w-[99px] items-center rounded bg-[#f1f1f4]">
      <select aria-label="页面" defaultValue="页面-1" className="h-full w-[83px] appearance-none pl-[7px] text-[#111] outline-none">
        <option>页面-1</option>
      </select>
      <span className="flex h-full grow items-center justify-center bg-[#e9e9f3] text-[#666]"><Caret /></span>
    </div>
    <span className="ml-1 h-5 w-px bg-[#cfcfd6]" />
    <button type="button" aria-label="添加页面" className="px-5">
      <svg viewBox="0 0 14 14" className="size-3.5" aria-hidden="true"><path d="M7 0v14M0 7h14" stroke="#444" strokeWidth="1.200" /></svg>
    </button>
    <span className="h-5 w-px bg-[#cfcfd6]" />
    <button type="button" className="px-[22px] font-medium text-[#24a87e]">页面-1</button>
    <span className="h-5 w-px bg-[#cfcfd6]" />

    <div className="ml-auto flex items-center pr-4">
      <span>主题计数：</span>
      <span className="ml-1">108</span>
      <svg viewBox="0 0 12 11" className="ml-1 h-[11px] w-3" aria-hidden="true">
        <path d="M3 0h6l3 4-6 7-6-7z" fill="#fbb034" />
        <path d="M3.500 4 6 6.500 8.500 4" fill="none" stroke="#fff6dc" strokeWidth="1.300" />
      </svg>
      <button type="button" aria-label="导航" className="ml-3"><Icon className="size-4"><path d="M1 3.500 7 2.500l6 1 6-1V16.500l-6 1-6-1-6 1zM7 2.500v14M13 3.500v14" strokeWidth="1.200" /></Icon></button>
      <button type="button" aria-label="适应页面" className="ml-3"><Icon className="size-4"><path d="M1.500 1.500h17v17h-17z" /><path d="M6 7h8v6H6zM4 5.500V4h1.500M14.500 4H16v1.500M4 14.500V16h1.500M14.500 16H16v-1.500" strokeWidth="1.200" /></Icon></button>
      <button type="button" aria-label="适应内容" className="ml-3"><Icon className="size-4"><path d="M1.500 1.500h17v17h-17z" strokeWidth="1.200" /><path d="M5 8V5h3M12 5h3v3M5 12v3h3M12 15h3v-3" /></Icon></button>
      <button type="button" aria-label="缩小" className="ml-3"><svg viewBox="0 0 10 10" className="size-2.5" aria-hidden="true"><path d="M0 5h10" stroke="#333" strokeWidth="1.200" /></svg></button>
      <input
        type="range"
        aria-label="缩放"
        defaultValue={21}
        className="ml-[5px] h-3 w-[100px] appearance-none bg-transparent [&::-webkit-slider-runnable-track]:h-[2px] [&::-webkit-slider-runnable-track]:bg-linear-to-r [&::-webkit-slider-runnable-track]:from-black [&::-webkit-slider-runnable-track]:from-25% [&::-webkit-slider-runnable-track]:to-[#d9d9de] [&::-webkit-slider-runnable-track]:to-25% [&::-webkit-slider-thumb]:-mt-[5px] [&::-webkit-slider-thumb]:size-3 [&::-webkit-slider-thumb]:appearance-none [&::-webkit-slider-thumb]:rounded-full [&::-webkit-slider-thumb]:border-2 [&::-webkit-slider-thumb]:border-black [&::-webkit-slider-thumb]:bg-white"
      />
      <button type="button" aria-label="放大" className="ml-[5px]"><svg viewBox="0 0 10 10" className="size-2.5" aria-hidden="true"><path d="M0 5h10M5 0v10" stroke="#333" strokeWidth="1.200" /></svg></button>
      <button type="button" className="ml-3.5 flex items-center gap-2">94%<Caret /></button>
      <button type="button" aria-label="全屏" className="ml-10"><Icon className="size-4"><path d="M1.500 7V1.500H7M13 1.500h5.500V7M18.500 13v5.500H13M7 18.500H1.500V13" strokeLinecap="butt" /></Icon></button>
      <button type="button" aria-label="适应宽度" className="ml-5"><Icon className="size-4"><path d="M1.500 1.500h17v17h-17zM4 10h12M6.500 7.500 4 10l2.500 2.500M13.500 7.500 16 10l-2.500 2.500" strokeLinecap="butt" /></Icon></button>
    </div>
  </footer>
);

const App: React.FC = () => (
  <div lang="zh-CN" className="relative flex h-screen flex-col overflow-hidden bg-white font-['Noto_Sans','Noto_Sans_CJK_SC',sans-serif]">
    <TitleBar />
    <MenuBar />
    <Ribbon />
    <DocTabs />
    <div className="flex min-h-0 flex-1">
      <Canvas />
      <SidePanel />
    </div>
    <StatusBar />
    <Watermark />
  </div>
);

export default App;
